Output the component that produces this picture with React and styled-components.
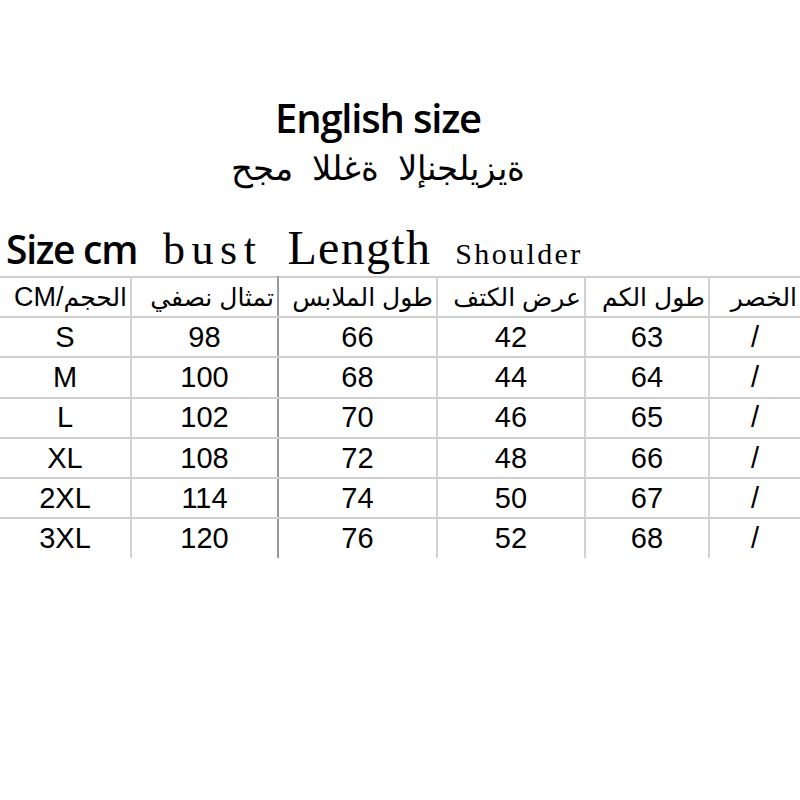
import React from 'react';
import styled, { createGlobalStyle } from 'styled-components';

const GlobalStyle = createGlobalStyle`
  body {
    margin: 0;
    background: #fff;
  }
`;

const Page = styled.div`
  width: 800px;
  height: 800px;
  background: #fff;
  color: #000;
  overflow: hidden;
`;

const Heading = styled.div`
  display: flex;
  flex-direction: column;
  align-items: center;
  padding-top: 95px;
  padding-right: 44px;
`;

const Title = styled.div`
  font-family: "Open Sans", sans-serif;
  font-weight: 600;
  font-size: 40px;
  line-height: 46px;
  letter-spacing: -1.2px;
`;

const Subtitle = styled.div`
  font-family: "DejaVu Sans", sans-serif;
  font-weight: 300;
  font-size: 34px;
  line-height: 40px;
  margin-top: 7px;
  word-spacing: 8px;
  direction: ltr;
  unicode-bidi: bidi-override;
`;

const LabelRow = styled.div`
  display: flex;
  align-items: baseline;
  padding-left: 6px;
  margin-top: 36px;
  height: 52px;
`;

const SizeLabel = styled.span`
  font-family: "Open Sans", sans-serif;
  font-weight: 600;
  font-size: 39px;
  line-height: 1;
  letter-spacing: -1.3px;
  margin-right: 26px;
`;

const SerifLabel = styled.span`
  font-family: "Liberation Serif", serif;
  font-size: ${(p) => p.size}px;
  line-height: 1;
  letter-spacing: ${(p) => p.spacing}px;
  margin-right: ${(p) => p.gap}px;
`;

const Table = styled.table`
  border-collapse: collapse;
  table-layout: fixed;
  width: 800px;
  border-top: 2px solid #cfcfcf;
`;

const Col = styled.col`
  width: ${(p) => p.w}px;
`;

const HeadCell = styled.th`
  font-family: "Liberation Sans", "DejaVu Sans", sans-serif;
  font-weight: 400;
  font-size: 25px;
  height: 38px;
  padding: 0 3px 0 0;
  text-align: right;
  white-space: nowrap;
  border-bottom: 2px solid #cfcfcf;
  border-left: ${(p) => (p.first ? 'none' : `2px solid ${p.dark ? '#9a9a9a' : '#d2d2d2'}`)};
`;

const Latin = styled.span`
  font-family: "Liberation Sans", sans-serif;
  font-size: 27px;
`;

const Cell = styled.td`
  font-family: "Liberation Sans", sans-serif;
  font-size: 29px;
  height: 38.3px;
  padding: 0;
  text-align: center;
  border-bottom: ${(p) => (p.last ? 'none' : '2px solid #cfcfcf')};
  border-left: ${(p) => (p.first ? 'none' : `2px solid ${p.dark ? '#9a9a9a' : '#d2d2d2'}`)};
`;

const widths = [131, 147, 159, 148, 124, 91];

const headers = [
  'تمثال نصفي',
  'طول الملابس',
  'عرض الكتف',
  'طول الكم',
  'الخصر',
];

const rows = [
  ['S', 98, 66, 42, 63, '/'],
  ['M', 100, 68, 44, 64, '/'],
  ['L', 102, 70, 46, 65, '/'],
  ['XL', 108, 72, 48, 66, '/'],
  ['2XL', 114, 74, 50, 67, '/'],
  ['3XL', 120, 76, 52, 68, '/'],
];

const App = () => (
  <Page>
    <GlobalStyle />
    <Heading>
      <Title>English size</Title>
      <Subtitle>حجم اللغة الإنجليزية</Subtitle>
    </Heading>
    <LabelRow>
      <SizeLabel>Size cm</SizeLabel>
      <SerifLabel size={44} spacing={6.5} gap={25}>bust</SerifLabel>
      <SerifLabel size={48} spacing={1.3} gap={24}>Length</SerifLabel>
      <SerifLabel size={30} spacing={2.4} gap={0}>Shoulder</SerifLabel>
    </LabelRow>
    <Table>
      <colgroup>
        {widths.map((w) => <Col key={w} w={w} />)}
      </colgroup>
      <thead>
        <tr>
          <HeadCell first dir="ltr">
            <Latin>CM/</Latin>الحجم
          </HeadCell>
          {headers.map((h, i) => (
            <HeadCell key={h} dark={i === 1} dir="rtl">
              {h}
            </HeadCell>
          ))}
        </tr>
      </thead>
      <tbody>
        {rows.map((r, ri) => (
          <tr key={r[0]}>
            {r.map((v, i) => (
              <Cell key={i} first={i === 0} dark={i === 2} last={ri === rows.length - 1}>
                {v}
              </Cell>
            ))}
          </tr>
        ))}
      </tbody>
    </Table>
  </Page>
);

export default App;
